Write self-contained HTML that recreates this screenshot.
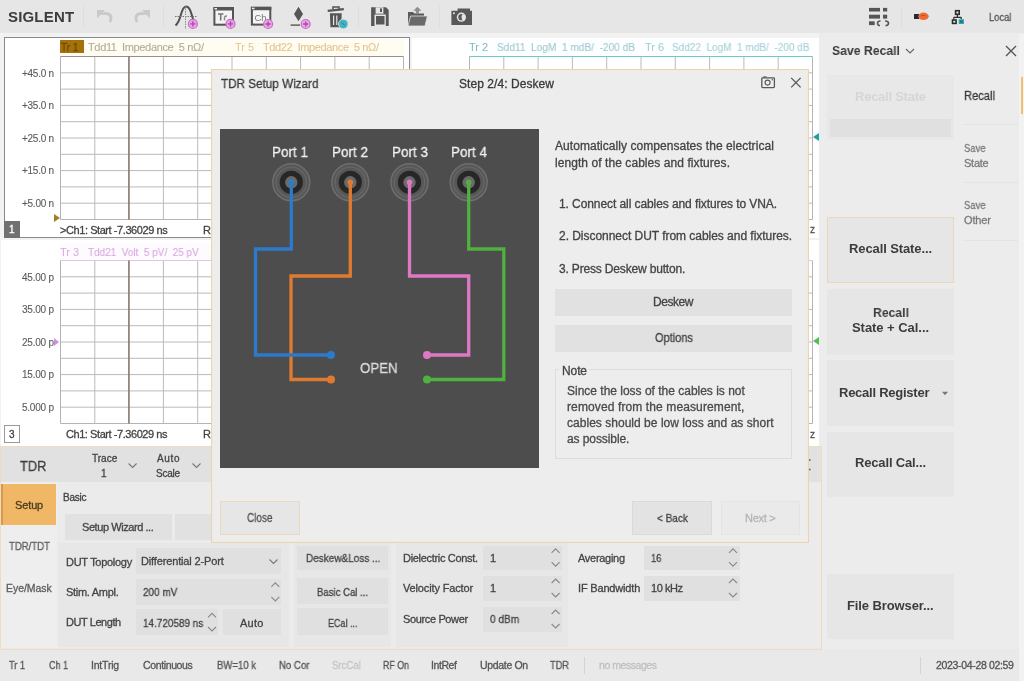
<!DOCTYPE html>
<html><head><meta charset="utf-8"><style>
*{margin:0;padding:0;box-sizing:border-box}
html,body{width:1024px;height:681px;overflow:hidden;background:#ececec;font-family:"Liberation Sans",sans-serif;color:#444}
.a{position:absolute}
.t{position:absolute;white-space:nowrap;will-change:transform;-webkit-text-stroke:0.3px currentColor}
svg{position:absolute;overflow:visible}
</style></head><body>
<div class="a" style="left:0px;top:33px;width:820px;height:413px;background:#f2f2f2;"></div>
<div class="a" style="left:4px;top:37px;width:406px;height:201px;background:#fff;border:1px solid #8a8a8a"></div>
<div class="a" style="left:411.5px;top:38px;width:407.5px;height:200px;background:#fff;"></div>
<div class="a" style="left:1px;top:240px;width:409px;height:206px;background:#fff;"></div>
<div class="a" style="left:411.5px;top:240px;width:407.5px;height:206px;background:#fff;"></div>
<div class="a" style="left:60px;top:39px;width:344px;height:17px;background:#fffcf2;"></div>
<div class="a" style="left:469px;top:39px;width:344px;height:17px;background:#fcfeff;"></div>
<div class="a" style="left:60px;top:243px;width:344px;height:17px;background:#fefbfe;"></div>
<svg style="left:0;top:0" width="1024" height="681"><path d="M94.80 56.5 L94.80 219.5 M129.10 56.5 L129.10 219.5 M163.40 56.5 L163.40 219.5 M197.70 56.5 L197.70 219.5 M232.00 56.5 L232.00 219.5 M266.30 56.5 L266.30 219.5 M300.60 56.5 L300.60 219.5 M334.90 56.5 L334.90 219.5 M369.20 56.5 L369.20 219.5 M60.5 72.80 L403.5 72.80 M60.5 89.10 L403.5 89.10 M60.5 105.40 L403.5 105.40 M60.5 121.70 L403.5 121.70 M60.5 138.00 L403.5 138.00 M60.5 154.30 L403.5 154.30 M60.5 170.60 L403.5 170.60 M60.5 186.90 L403.5 186.90 M60.5 203.20 L403.5 203.20 " stroke="#bababa" stroke-width="1" fill="none"/><path d="M60.5 56.5 L60.5 219.5 L403.5 219.5 L403.5 56.5" stroke="#b4b4b4" stroke-width="1" fill="none"/><path d="M60.5 56.5 L403.5 56.5" stroke="#9a9088" stroke-width="1.2"/><path d="M128.9 56.5 L128.9 219.5" stroke="#80685e" stroke-width="1.3"/></svg>
<svg style="left:0;top:0" width="1024" height="681"><path d="M503.80 56.5 L503.80 219.5 M538.10 56.5 L538.10 219.5 M572.40 56.5 L572.40 219.5 M606.70 56.5 L606.70 219.5 M641.00 56.5 L641.00 219.5 M675.30 56.5 L675.30 219.5 M709.60 56.5 L709.60 219.5 M743.90 56.5 L743.90 219.5 M778.20 56.5 L778.20 219.5 M469.5 72.80 L812.5 72.80 M469.5 89.10 L812.5 89.10 M469.5 105.40 L812.5 105.40 M469.5 121.70 L812.5 121.70 M469.5 138.00 L812.5 138.00 M469.5 154.30 L812.5 154.30 M469.5 170.60 L812.5 170.60 M469.5 186.90 L812.5 186.90 M469.5 203.20 L812.5 203.20 " stroke="#bababa" stroke-width="1" fill="none"/><path d="M469.5 56.5 L469.5 219.5 L812.5 219.5 L812.5 56.5" stroke="#b4b4b4" stroke-width="1" fill="none"/><path d="M469.5 56.5 L812.5 56.5" stroke="#70c8c8" stroke-width="1.2"/></svg>
<svg style="left:0;top:0" width="1024" height="681"><path d="M94.80 260.5 L94.80 423.5 M129.10 260.5 L129.10 423.5 M163.40 260.5 L163.40 423.5 M197.70 260.5 L197.70 423.5 M232.00 260.5 L232.00 423.5 M266.30 260.5 L266.30 423.5 M300.60 260.5 L300.60 423.5 M334.90 260.5 L334.90 423.5 M369.20 260.5 L369.20 423.5 M60.5 276.80 L403.5 276.80 M60.5 293.10 L403.5 293.10 M60.5 309.40 L403.5 309.40 M60.5 325.70 L403.5 325.70 M60.5 342.00 L403.5 342.00 M60.5 358.30 L403.5 358.30 M60.5 374.60 L403.5 374.60 M60.5 390.90 L403.5 390.90 M60.5 407.20 L403.5 407.20 " stroke="#bababa" stroke-width="1" fill="none"/><path d="M60.5 260.5 L60.5 423.5 L403.5 423.5 L403.5 260.5" stroke="#b4b4b4" stroke-width="1" fill="none"/><path d="M60.5 260.5 L403.5 260.5" stroke="#e0c4ea" stroke-width="1.2"/><path d="M128.9 260.5 L128.9 423.5" stroke="#80685e" stroke-width="1.3"/></svg>
<svg style="left:0;top:0" width="1024" height="681"><path d="M503.80 260.5 L503.80 423.5 M538.10 260.5 L538.10 423.5 M572.40 260.5 L572.40 423.5 M606.70 260.5 L606.70 423.5 M641.00 260.5 L641.00 423.5 M675.30 260.5 L675.30 423.5 M709.60 260.5 L709.60 423.5 M743.90 260.5 L743.90 423.5 M778.20 260.5 L778.20 423.5 M469.5 276.80 L812.5 276.80 M469.5 293.10 L812.5 293.10 M469.5 309.40 L812.5 309.40 M469.5 325.70 L812.5 325.70 M469.5 342.00 L812.5 342.00 M469.5 358.30 L812.5 358.30 M469.5 374.60 L812.5 374.60 M469.5 390.90 L812.5 390.90 M469.5 407.20 L812.5 407.20 " stroke="#bababa" stroke-width="1" fill="none"/><path d="M469.5 260.5 L469.5 423.5 L812.5 423.5 L812.5 260.5" stroke="#b4b4b4" stroke-width="1" fill="none"/><path d="M469.5 260.5 L812.5 260.5" stroke="#e0c4ea" stroke-width="1.2"/></svg>
<div class="a" style="left:60px;top:40px;width:24px;height:13px;background:#a5720a;"></div>
<div class="t" style="left:61.00px;top:39.55px;line-height:14.30px;font-size:11px;color:#6a4606;font-weight:normal;transform:scaleX(0.9143);transform-origin:0 0;">Tr 1</div>
<div class="t" style="left:88.00px;top:39.55px;line-height:14.30px;font-size:11px;color:#b4aa9c;font-weight:normal;letter-spacing:-0.347px;-webkit-text-stroke:0.1px currentColor;">Tdd11&nbsp; Impedance&nbsp; 5 n&Omega;/</div>
<div class="t" style="left:235.00px;top:39.55px;line-height:14.30px;font-size:11px;color:#e4c48e;font-weight:normal;-webkit-text-stroke:0;">Tr 5</div>
<div class="t" style="left:263.00px;top:39.55px;line-height:14.30px;font-size:11px;color:#e4c48e;font-weight:normal;letter-spacing:-0.382px;-webkit-text-stroke:0.1px currentColor;">Tdd22&nbsp; Impedance&nbsp; 5 n&Omega;/</div>
<div class="t" style="left:469.00px;top:39.55px;line-height:14.30px;font-size:11px;color:#84b8bc;font-weight:normal;-webkit-text-stroke:0;">Tr 2</div>
<div class="t" style="left:497.00px;top:39.55px;line-height:14.30px;font-size:11px;color:#a0c8d0;font-weight:normal;transform:scaleX(0.9184);transform-origin:0 0;-webkit-text-stroke:0.1px currentColor;">Sdd11&nbsp; LogM&nbsp; 1 mdB/&nbsp; -200 dB</div>
<div class="t" style="left:645.00px;top:39.55px;line-height:14.30px;font-size:11px;color:#9cccd4;font-weight:normal;-webkit-text-stroke:0;">Tr 6</div>
<div class="t" style="left:672.00px;top:39.55px;line-height:14.30px;font-size:11px;color:#a8d0d8;font-weight:normal;transform:scaleX(0.9098);transform-origin:0 0;-webkit-text-stroke:0.1px currentColor;">Sdd22&nbsp; LogM&nbsp; 1 mdB/&nbsp; -200 dB</div>
<div class="t" style="left:60.00px;top:244.75px;line-height:14.30px;font-size:11px;color:#d8a8e0;font-weight:normal;-webkit-text-stroke:0;">Tr 3</div>
<div class="t" style="left:88.00px;top:244.75px;line-height:14.30px;font-size:11px;color:#d8a8e0;font-weight:normal;transform:scaleX(0.9050);transform-origin:0 0;-webkit-text-stroke:0.1px currentColor;">Tdd21&nbsp; Volt&nbsp; 5 pV/&nbsp; 25 pV</div>
<div class="t" style="left:22.00px;top:66.50px;line-height:13.00px;font-size:10px;color:#5a5a5a;font-weight:normal;letter-spacing:-0.267px;-webkit-text-stroke:0.1px currentColor;">+45.0 n</div>
<div class="t" style="left:22.00px;top:99.10px;line-height:13.00px;font-size:10px;color:#5a5a5a;font-weight:normal;letter-spacing:-0.267px;-webkit-text-stroke:0.1px currentColor;">+35.0 n</div>
<div class="t" style="left:22.00px;top:131.70px;line-height:13.00px;font-size:10px;color:#5a5a5a;font-weight:normal;letter-spacing:-0.267px;-webkit-text-stroke:0.1px currentColor;">+25.0 n</div>
<div class="t" style="left:22.00px;top:164.30px;line-height:13.00px;font-size:10px;color:#5a5a5a;font-weight:normal;letter-spacing:-0.267px;-webkit-text-stroke:0.1px currentColor;">+15.0 n</div>
<div class="t" style="left:22.00px;top:196.90px;line-height:13.00px;font-size:10px;color:#5a5a5a;font-weight:normal;letter-spacing:-0.267px;-webkit-text-stroke:0.1px currentColor;">+5.00 n</div>
<div class="t" style="left:22.00px;top:270.50px;line-height:13.00px;font-size:10px;color:#5a5a5a;font-weight:normal;letter-spacing:-0.233px;-webkit-text-stroke:0.1px currentColor;">45.00 p</div>
<div class="t" style="left:22.00px;top:303.10px;line-height:13.00px;font-size:10px;color:#5a5a5a;font-weight:normal;letter-spacing:-0.233px;-webkit-text-stroke:0.1px currentColor;">35.00 p</div>
<div class="t" style="left:22.00px;top:335.70px;line-height:13.00px;font-size:10px;color:#5a5a5a;font-weight:normal;letter-spacing:-0.233px;-webkit-text-stroke:0.1px currentColor;">25.00 p</div>
<div class="t" style="left:22.00px;top:368.30px;line-height:13.00px;font-size:10px;color:#5a5a5a;font-weight:normal;letter-spacing:-0.233px;-webkit-text-stroke:0.1px currentColor;">15.00 p</div>
<div class="t" style="left:22.00px;top:400.90px;line-height:13.00px;font-size:10px;color:#5a5a5a;font-weight:normal;letter-spacing:-0.233px;-webkit-text-stroke:0.1px currentColor;">5.000 p</div>
<svg style="left:0;top:0" width="1024" height="681"><path d="M54 214 L60 218 L54 222 Z" fill="#a08020"/><path d="M54 338 L59 342 L54 346 Z" fill="#c890e4"/><path d="M819 133 L813 137 L819 141 Z" fill="#20a0a0"/><path d="M819 337 L813 341 L819 345 Z" fill="#50c050"/></svg>
<div class="a" style="left:4px;top:221px;width:16px;height:17px;background:#707070;"></div>
<div class="t" style="left:9.20px;top:223.00px;line-height:13.00px;font-size:10px;color:#fff;font-weight:normal;">1</div>
<div class="t" style="left:60.00px;top:222.55px;line-height:14.30px;font-size:11px;color:#444;font-weight:normal;letter-spacing:-0.429px;">&gt;Ch1: Start -7.36029 ns</div>
<div class="t" style="left:203.00px;top:222.55px;line-height:14.30px;font-size:11px;color:#444;font-weight:normal;">R</div>
<div class="a" style="left:4px;top:425px;width:16px;height:18px;background:#fff;border:1px solid #9a9a9a"></div>
<div class="t" style="left:9.20px;top:427.50px;line-height:13.00px;font-size:10px;color:#444;font-weight:normal;">3</div>
<div class="t" style="left:66.00px;top:426.85px;line-height:14.30px;font-size:11px;color:#444;font-weight:normal;letter-spacing:-0.436px;">Ch1: Start -7.36029 ns</div>
<div class="t" style="left:203.00px;top:426.85px;line-height:14.30px;font-size:11px;color:#444;font-weight:normal;">R</div>
<div class="t" style="left:810.00px;top:223.20px;line-height:13.00px;font-size:10px;color:#555;font-weight:normal;">z</div>
<div class="t" style="left:810.00px;top:427.50px;line-height:13.00px;font-size:10px;color:#555;font-weight:normal;">z</div>
<div class="a" style="left:819px;top:34px;width:205px;height:616px;background:#ececec;"></div>
<div class="a" style="left:1019px;top:34px;width:5px;height:647px;background:#f2f2f2;"></div>
<div class="t" style="left:832.00px;top:42.43px;line-height:17.55px;font-size:13.5px;color:#3a3a3a;font-weight:bold;transform:scaleX(0.9059);transform-origin:0 0;-webkit-text-stroke:0;">Save Recall</div>
<div class="a" style="left:827px;top:75px;width:127px;height:65px;background:#e8e8e8;"></div>
<div class="a" style="left:830px;top:119px;width:121px;height:18px;background:#e0e0e0;"></div>
<div class="t" style="left:855.00px;top:88.95px;line-height:16.90px;font-size:13px;color:#d6d6d6;font-weight:bold;letter-spacing:-0.246px;-webkit-text-stroke:0;">Recall State</div>
<div class="a" style="left:1021px;top:77px;width:2px;height:37px;background:#f0c070;"></div>
<div class="t" style="left:964.40px;top:89.20px;line-height:15.60px;font-size:12px;color:#3a3a3a;font-weight:normal;transform:scaleX(0.9293);transform-origin:0 0;">Recall</div>
<div class="a" style="left:963px;top:124px;width:55px;height:1px;background:#e4e4e4;"></div>
<div class="t" style="left:964.40px;top:140.55px;line-height:14.30px;font-size:11px;color:#7a7a7a;font-weight:normal;transform:scaleX(0.8612);transform-origin:0 0;">Save</div>
<div class="t" style="left:964.40px;top:155.55px;line-height:14.30px;font-size:11px;color:#7a7a7a;font-weight:normal;letter-spacing:-0.257px;">State</div>
<div class="a" style="left:963px;top:182px;width:55px;height:1px;background:#e4e4e4;"></div>
<div class="t" style="left:964.40px;top:197.85px;line-height:14.30px;font-size:11px;color:#7a7a7a;font-weight:normal;transform:scaleX(0.8612);transform-origin:0 0;">Save</div>
<div class="t" style="left:964.40px;top:213.35px;line-height:14.30px;font-size:11px;color:#7a7a7a;font-weight:normal;letter-spacing:-0.125px;">Other</div>
<div class="a" style="left:963px;top:240px;width:55px;height:1px;background:#e4e4e4;"></div>
<div class="a" style="left:827px;top:217px;width:127px;height:66px;background:#e6e6e6;border:1px solid #ecd8b8"></div>
<div class="t" style="left:849.00px;top:240.85px;line-height:16.90px;font-size:13px;color:#3c3c3c;font-weight:bold;letter-spacing:-0.107px;-webkit-text-stroke:0;">Recall State...</div>
<div class="a" style="left:827px;top:289px;width:127px;height:66px;background:#e6e6e6;"></div>
<div class="t" style="left:872.50px;top:304.55px;line-height:16.90px;font-size:13px;color:#3c3c3c;font-weight:bold;transform:scaleX(0.9387);transform-origin:0 0;-webkit-text-stroke:0;">Recall</div>
<div class="t" style="left:852.00px;top:320.25px;line-height:16.90px;font-size:13px;color:#3c3c3c;font-weight:bold;letter-spacing:-0.047px;-webkit-text-stroke:0;">State + Cal...</div>
<div class="a" style="left:827px;top:360px;width:127px;height:66px;background:#e6e6e6;"></div>
<div class="t" style="left:838.50px;top:385.15px;line-height:16.90px;font-size:13px;color:#3c3c3c;font-weight:bold;letter-spacing:-0.249px;-webkit-text-stroke:0;">Recall Register</div>
<div class="a" style="left:827px;top:432px;width:127px;height:65px;background:#e6e6e6;"></div>
<div class="t" style="left:855.00px;top:454.75px;line-height:16.90px;font-size:13px;color:#3c3c3c;font-weight:bold;letter-spacing:-0.161px;-webkit-text-stroke:0;">Recall Cal...</div>
<div class="a" style="left:827px;top:574px;width:127px;height:65px;background:#e6e6e6;"></div>
<div class="t" style="left:847.20px;top:598.25px;line-height:16.90px;font-size:13px;color:#3c3c3c;font-weight:bold;letter-spacing:-0.110px;-webkit-text-stroke:0;">File Browser...</div>
<svg style="left:0;top:0" width="1024" height="681"><path d="M906 49 L910 53 L914 49" fill="none" stroke="#666" stroke-width="1.2"/><path d="M1006 46 L1016 56 M1016 46 L1006 56" stroke="#555" stroke-width="1.4"/><path d="M942 391.8 L948 391.8 L945 395.2 Z" fill="#777"/></svg>
<div class="a" style="left:0px;top:446px;width:822px;height:203px;background:#e9e9e9;border-top:1px solid #efdcc0;border-right:1px solid #efdcc0;border-left:1px solid #efdcc0"></div>
<div class="a" style="left:1px;top:447px;width:820px;height:35px;background:#e1e1e1;"></div>
<div class="t" style="left:20.40px;top:455.95px;line-height:19.50px;font-size:15px;color:#3e3e3e;font-weight:normal;transform:scaleX(0.8544);transform-origin:0 0;">TDR</div>
<div class="t" style="left:92.35px;top:451.70px;line-height:13.00px;font-size:10px;color:#444;font-weight:normal;letter-spacing:0.025px;">Trace</div>
<div class="t" style="left:101.40px;top:466.80px;line-height:13.00px;font-size:10px;color:#444;font-weight:normal;">1</div>
<div class="t" style="left:156.70px;top:451.70px;line-height:13.00px;font-size:10px;color:#444;font-weight:normal;letter-spacing:0.667px;">Auto</div>
<div class="t" style="left:156.40px;top:466.80px;line-height:13.00px;font-size:10px;color:#444;font-weight:normal;letter-spacing:-0.250px;">Scale</div>
<div class="a" style="left:1px;top:482px;width:56px;height:166px;background:#eeeeee;"></div>
<div class="a" style="left:1px;top:483.5px;width:55px;height:41px;background:#f0b866;"></div>
<div class="a" style="left:1px;top:483.5px;width:2px;height:41px;background:#d89a48;"></div>
<div class="t" style="left:15.30px;top:497.55px;line-height:14.30px;font-size:11px;color:#4a3a20;font-weight:normal;letter-spacing:-0.128px;">Setup</div>
<div class="t" style="left:8.95px;top:540.17px;line-height:13.65px;font-size:10.5px;color:#5e5e5e;font-weight:normal;transform:scaleX(0.9101);transform-origin:0 0;">TDR/TDT</div>
<div class="t" style="left:5.90px;top:582.38px;line-height:13.65px;font-size:10.5px;color:#5e5e5e;font-weight:normal;letter-spacing:-0.057px;">Eye/Mask</div>
<div class="a" style="left:57px;top:482px;width:764px;height:166px;background:#ebebeb;"></div>
<div class="t" style="left:63.40px;top:491.10px;line-height:13.00px;font-size:10px;color:#444;font-weight:normal;letter-spacing:-0.250px;">Basic</div>
<div class="a" style="left:65px;top:514px;width:107px;height:26px;background:#e1e1e1;"></div>
<div class="t" style="left:82.15px;top:519.85px;line-height:14.30px;font-size:11px;color:#444;font-weight:normal;letter-spacing:-0.434px;">Setup Wizard ...</div>
<div class="a" style="left:175px;top:514px;width:40px;height:26px;background:#e1e1e1;"></div>
<div class="a" style="left:58px;top:543px;width:231px;height:104px;background:#e7e7e7;"></div>
<div class="t" style="left:65.80px;top:554.55px;line-height:14.30px;font-size:11px;color:#444;font-weight:normal;letter-spacing:-0.282px;">DUT Topology</div>
<div class="t" style="left:65.80px;top:585.15px;line-height:14.30px;font-size:11px;color:#444;font-weight:normal;letter-spacing:-0.286px;">Stim. Ampl.</div>
<div class="t" style="left:65.80px;top:615.45px;line-height:14.30px;font-size:11px;color:#444;font-weight:normal;letter-spacing:-0.430px;">DUT Length</div>
<div class="a" style="left:136px;top:548px;width:145px;height:26px;background:#e0e0e0;"></div>
<div class="t" style="left:141.00px;top:554.45px;line-height:14.30px;font-size:11px;color:#444;font-weight:normal;letter-spacing:-0.148px;">Differential 2-Port</div>
<div class="a" style="left:136px;top:578.5px;width:145px;height:26px;background:#e0e0e0;"></div>
<div class="t" style="left:142.50px;top:585.35px;line-height:14.30px;font-size:11px;color:#444;font-weight:normal;transform:scaleX(0.9065);transform-origin:0 0;">200 mV</div>
<div class="a" style="left:136px;top:608.5px;width:82px;height:26.5px;background:#e0e0e0;"></div>
<div class="t" style="left:142.50px;top:615.85px;line-height:14.30px;font-size:11px;color:#444;font-weight:normal;transform:scaleX(0.9031);transform-origin:0 0;">14.720589 ns</div>
<div class="a" style="left:223px;top:608.5px;width:58px;height:26.5px;background:#e0e0e0;"></div>
<div class="t" style="left:240.20px;top:615.85px;line-height:14.30px;font-size:11px;color:#444;font-weight:normal;letter-spacing:0.247px;">Auto</div>
<div class="a" style="left:294px;top:543px;width:97px;height:104px;background:#e7e7e7;"></div>
<div class="a" style="left:297px;top:546px;width:91px;height:24px;background:#e0e0e0;"></div>
<div class="t" style="left:305.60px;top:551.25px;line-height:14.30px;font-size:11px;color:#444;font-weight:normal;transform:scaleX(0.9079);transform-origin:0 0;">Deskew&amp;Loss ...</div>
<div class="a" style="left:297px;top:578px;width:91px;height:26px;background:#e0e0e0;"></div>
<div class="t" style="left:316.90px;top:584.65px;line-height:14.30px;font-size:11px;color:#444;font-weight:normal;transform:scaleX(0.8699);transform-origin:0 0;">Basic Cal ...</div>
<div class="a" style="left:297px;top:608px;width:91px;height:27px;background:#e0e0e0;"></div>
<div class="t" style="left:327.70px;top:615.55px;line-height:14.30px;font-size:11px;color:#444;font-weight:normal;transform:scaleX(0.8149);transform-origin:0 0;">ECal ...</div>
<div class="a" style="left:396px;top:543px;width:172px;height:104px;background:#e7e7e7;"></div>
<div class="t" style="left:403.30px;top:550.85px;line-height:14.30px;font-size:11px;color:#444;font-weight:normal;letter-spacing:-0.317px;">Dielectric Const.</div>
<div class="t" style="left:403.30px;top:581.05px;line-height:14.30px;font-size:11px;color:#444;font-weight:normal;letter-spacing:-0.140px;">Velocity Factor</div>
<div class="t" style="left:403.30px;top:611.65px;line-height:14.30px;font-size:11px;color:#444;font-weight:normal;letter-spacing:-0.362px;">Source Power</div>
<div class="a" style="left:482.5px;top:546px;width:79px;height:24px;background:#e0e0e0;"></div>
<div class="t" style="left:489.70px;top:550.85px;line-height:14.30px;font-size:11px;color:#444;font-weight:normal;">1</div>
<div class="a" style="left:482.5px;top:575.5px;width:79px;height:25.5px;background:#e0e0e0;"></div>
<div class="t" style="left:489.70px;top:581.05px;line-height:14.30px;font-size:11px;color:#444;font-weight:normal;">1</div>
<div class="a" style="left:482.5px;top:606.5px;width:79px;height:25px;background:#e0e0e0;"></div>
<div class="t" style="left:489.70px;top:611.65px;line-height:14.30px;font-size:11px;color:#444;font-weight:normal;transform:scaleX(0.9154);transform-origin:0 0;">0 dBm</div>
<div class="t" style="left:578.30px;top:550.85px;line-height:14.30px;font-size:11px;color:#444;font-weight:normal;letter-spacing:-0.285px;">Averaging</div>
<div class="t" style="left:578.30px;top:581.05px;line-height:14.30px;font-size:11px;color:#444;font-weight:normal;letter-spacing:-0.176px;">IF Bandwidth</div>
<div class="a" style="left:644.4px;top:546px;width:96px;height:24px;background:#e0e0e0;"></div>
<div class="t" style="left:651.00px;top:550.85px;line-height:14.30px;font-size:11px;color:#444;font-weight:normal;transform:scaleX(0.8600);transform-origin:0 0;">16</div>
<div class="a" style="left:644.4px;top:575.5px;width:96px;height:25.5px;background:#e0e0e0;"></div>
<div class="t" style="left:650.70px;top:581.05px;line-height:14.30px;font-size:11px;color:#444;font-weight:normal;letter-spacing:-0.442px;">10 kHz</div>
<svg style="left:0;top:0" width="1024" height="681"><path d="M128.6 463.5 L132.6 467.5 L136.6 463.5" fill="none" stroke="#777" stroke-width="1.1"/><path d="M192.5 463.5 L196.5 467.5 L200.5 463.5" fill="none" stroke="#777" stroke-width="1.1"/><path d="M269.5 559.5 L273.5 563.5 L277.5 559.5" fill="none" stroke="#777" stroke-width="1.1"/><path d="M271.3 586.8 L275.3 582.8 L279.3 586.8" fill="none" stroke="#888" stroke-width="1.1"/><path d="M271.3 596.9 L275.3 600.9 L279.3 596.9" fill="none" stroke="#888" stroke-width="1.1"/><path d="M208 617.3 L212 613.3 L216 617.3" fill="none" stroke="#888" stroke-width="1.1"/><path d="M208 627 L212 631 L216 627" fill="none" stroke="#888" stroke-width="1.1"/><path d="M551.6 552.8 L555.6 548.8 L559.6 552.8" fill="none" stroke="#888" stroke-width="1.1"/><path d="M551.6 562.1 L555.6 566.1 L559.6 562.1" fill="none" stroke="#888" stroke-width="1.1"/><path d="M551.6 583 L555.6 579 L559.6 583" fill="none" stroke="#888" stroke-width="1.1"/><path d="M551.6 593 L555.6 597 L559.6 593" fill="none" stroke="#888" stroke-width="1.1"/><path d="M551.6 614 L555.6 610 L559.6 614" fill="none" stroke="#888" stroke-width="1.1"/><path d="M551.6 624 L555.6 628 L559.6 624" fill="none" stroke="#888" stroke-width="1.1"/><path d="M729 552.8 L733 548.8 L737 552.8" fill="none" stroke="#888" stroke-width="1.1"/><path d="M729 562.1 L733 566.1 L737 562.1" fill="none" stroke="#888" stroke-width="1.1"/><path d="M729 583 L733 579 L737 583" fill="none" stroke="#888" stroke-width="1.1"/><path d="M729 593 L733 597 L737 593" fill="none" stroke="#888" stroke-width="1.1"/><circle cx="809.8" cy="460" r="0.9" fill="#666"/><circle cx="809.8" cy="469.5" r="0.9" fill="#666"/></svg>
<div class="a" style="left:0px;top:649px;width:1019px;height:32px;background:#e9e9e9;"></div>
<div class="a" style="left:0px;top:649px;width:822px;height:1px;background:#ecdcc4;"></div>
<div class="t" style="left:9.40px;top:658.67px;line-height:13.65px;font-size:10.5px;color:#555;font-weight:normal;transform:scaleX(0.8758);transform-origin:0 0;">Tr 1</div>
<div class="t" style="left:48.80px;top:658.67px;line-height:13.65px;font-size:10.5px;color:#555;font-weight:normal;transform:scaleX(0.8666);transform-origin:0 0;">Ch 1</div>
<div class="t" style="left:91.30px;top:658.67px;line-height:13.65px;font-size:10.5px;color:#555;font-weight:normal;letter-spacing:-0.200px;">IntTrig</div>
<div class="t" style="left:142.80px;top:658.67px;line-height:13.65px;font-size:10.5px;color:#555;font-weight:normal;letter-spacing:-0.370px;">Continuous</div>
<div class="t" style="left:216.50px;top:658.67px;line-height:13.65px;font-size:10.5px;color:#555;font-weight:normal;transform:scaleX(0.9082);transform-origin:0 0;">BW=10 k</div>
<div class="t" style="left:278.90px;top:658.67px;line-height:13.65px;font-size:10.5px;color:#555;font-weight:normal;transform:scaleX(0.9163);transform-origin:0 0;">No Cor</div>
<div class="t" style="left:331.70px;top:658.67px;line-height:13.65px;font-size:10.5px;color:#c4c4c4;font-weight:normal;transform:scaleX(0.9143);transform-origin:0 0;">SrcCal</div>
<div class="t" style="left:383.00px;top:658.67px;line-height:13.65px;font-size:10.5px;color:#555;font-weight:normal;transform:scaleX(0.8422);transform-origin:0 0;">RF On</div>
<div class="t" style="left:431.30px;top:658.67px;line-height:13.65px;font-size:10.5px;color:#555;font-weight:normal;letter-spacing:-0.427px;">IntRef</div>
<div class="t" style="left:480.00px;top:658.67px;line-height:13.65px;font-size:10.5px;color:#555;font-weight:normal;letter-spacing:-0.327px;">Update On</div>
<div class="t" style="left:550.00px;top:658.67px;line-height:13.65px;font-size:10.5px;color:#555;font-weight:normal;transform:scaleX(0.8784);transform-origin:0 0;">TDR</div>
<div class="t" style="left:599.00px;top:658.67px;line-height:13.65px;font-size:10.5px;color:#c0c0c0;font-weight:normal;letter-spacing:-0.447px;">no messages</div>
<div class="a" style="left:584px;top:657px;width:1px;height:17px;background:#d4d4d4;"></div>
<div class="a" style="left:920px;top:657px;width:1px;height:17px;background:#d4d4d4;"></div>
<div class="t" style="left:935.60px;top:658.67px;line-height:13.65px;font-size:10.5px;color:#555;font-weight:normal;letter-spacing:-0.330px;">2023-04-28 02:59</div>
<div class="a" style="left:0px;top:0px;width:1024px;height:33px;background:#e6e6e6;"></div>
<div class="t" style="left:8.00px;top:7.25px;line-height:19.50px;font-size:15px;color:#3c3c3c;font-weight:bold;letter-spacing:0.175px;-webkit-text-stroke:0;">SIGLENT</div>
<div class="a" style="left:83px;top:6px;width:1px;height:22px;background:#dedede;"></div>
<div class="a" style="left:163px;top:6px;width:1px;height:22px;background:#dedede;"></div>
<div class="a" style="left:358px;top:6px;width:1px;height:22px;background:#dedede;"></div>
<div class="a" style="left:439px;top:6px;width:1px;height:22px;background:#dedede;"></div>
<div class="a" style="left:901px;top:6px;width:1px;height:22px;background:#dedede;"></div>
<svg style="left:0;top:0" width="1024" height="34">
<!-- undo / redo -->
<g fill="#c9c9c9">
<path d="M97 10 L105 10 L102.5 12.6 Q104 12 106 12 Q112.5 12.5 112.5 18 Q112.3 21 111 22.6 L108.6 21.6 Q109.6 20 109.5 18 Q109.2 15 106 15 Q103.8 15 100.7 14.5 L97 18.5 Z"/>
<path d="M150 10 L142 10 L144.5 12.6 Q143 12 141 12 Q134.5 12.5 134.5 18 Q134.7 21 136 22.6 L138.4 21.6 Q137.4 20 137.5 18 Q137.8 15 141 15 Q143.2 15 146.3 14.5 L150 18.5 Z"/>
</g>
<!-- marker icon -->
<path d="M175.5 25.5 Q178.5 23 180.5 16 Q183 6.5 186 6.5 Q189.5 6.5 191.5 14 Q192.5 17.5 193 19" fill="none" stroke="#505050" stroke-width="2"/>
<path d="M175 16.5 L197 16.5" stroke="#777" stroke-width="1" stroke-dasharray="1.5,1"/>
<path d="M185.5 6 L185.5 29" stroke="#888" stroke-width="1" stroke-dasharray="1.5,1"/>
<!-- Tr icon -->
<rect x="214.4" y="8.1" width="18.6" height="16.6" fill="#f4f4f4" stroke="#555" stroke-width="2"/>
<rect x="213.4" y="7.1" width="20.6" height="3.4" fill="#555"/>
<rect x="214.5" y="8" width="2.5" height="1.5" fill="#eee"/>
<path d="M218 14 L223.5 14 M220.7 14 L220.7 20.5" stroke="#777" stroke-width="1.6"/>
<path d="M224.5 20.5 L224.5 17 Q225 16 227 16" fill="none" stroke="#889" stroke-width="1.4"/>
<!-- Ch icon -->
<rect x="251.9" y="7.8" width="18.4" height="16.8" fill="#f4f4f4" stroke="#555" stroke-width="2"/>
<rect x="250.9" y="6.8" width="20.4" height="3.4" fill="#555"/>
<rect x="252" y="7.7" width="2.5" height="1.5" fill="#eee"/>
<text x="254.5" y="21.3" font-family="Liberation Sans" font-size="9.5" fill="#777">Ch</text>
<!-- diamond -->
<path d="M298.5 6.8 L303 14 L298.5 21.3 L294 14 Z" fill="#555"/>
<path d="M290.6 25.1 L300 25.1" stroke="#555" stroke-width="1.4"/>
<!-- trash -->
<path d="M327.7 10.8 L343.8 9.2" stroke="#555" stroke-width="2.2"/>
<path d="M333 9 L333 7 L339 7 L339 9" fill="none" stroke="#555" stroke-width="1.6"/>
<path d="M329.9 13.3 L341.7 13.3 L341.2 27.2 L330.4 27.2 Z" fill="#555"/>
<path d="M333.6 15.5 L333.6 25 M336.8 15.5 L336.8 25" stroke="#e6e6e6" stroke-width="1.2"/>
<!-- save -->
<path d="M371.1 7.3 L386 7.3 L388.7 10 L388.7 26 L371.1 26 Z" fill="#585858"/>
<rect x="375.6" y="7.3" width="7.8" height="6.4" fill="#e6e6e6"/>
<rect x="380" y="8.4" width="2" height="3.6" fill="#585858"/>
<rect x="374.5" y="14.5" width="11.3" height="11.5" fill="#e6e6e6"/>
<rect x="376" y="16" width="8.5" height="8.5" fill="#585858"/>
<!-- folder -->
<path d="M408 12 L413 12 L414.5 13.5 L424 13.5 L424 26 L408 26 Z" fill="#5a5a5a"/>
<path d="M410.5 16 L427.4 16 L425 26 L408 26 Z" fill="#6a6a6a" stroke="#e6e6e6" stroke-width="0.8"/>
<path d="M417.4 6.7 L421.5 10.8 L419 10.8 L419 14 L415.8 14 L415.8 10.8 L413.3 10.8 Z" fill="#8e8e8e"/>
<!-- camera -->
<path d="M451.4 10.8 L457.6 10.8 L457.6 8.4 L470 8.4 L470 10.8 L472 10.8 L472 24.9 L451.4 24.9 Z" fill="#585858"/>
<circle cx="461.4" cy="17.2" r="4.6" fill="#e6e6e6"/>
<circle cx="461.4" cy="17.2" r="3.1" fill="#585858"/>
<path d="M462.2 14.2 A3 3 0 0 1 462.2 20.2 Q460.6 17.2 462.2 14.2 Z" fill="#e6e6e6"/>
<circle cx="453.9" cy="13.2" r="1" fill="#e6e6e6"/>
<!-- pink plus circles -->
<g fill="#e8a6e6" stroke="#c86cc6" stroke-width="1.2">
<circle cx="192.9" cy="23.9" r="4.5"/><circle cx="230.5" cy="23.9" r="4.5"/><circle cx="268.1" cy="24" r="4.5"/><circle cx="305.7" cy="24" r="4.5"/>
</g>
<g stroke="#b046b0" stroke-width="1.4">
<path d="M190.3 23.9 L195.5 23.9 M192.9 21.3 L192.9 26.5"/><path d="M227.9 23.9 L233.1 23.9 M230.5 21.3 L230.5 26.5"/><path d="M265.5 24 L270.7 24 M268.1 21.4 L268.1 26.6"/><path d="M303.1 24 L308.3 24 M305.7 21.4 L305.7 26.6"/>
</g>
<circle cx="343.3" cy="24" r="4.8" fill="#40b4c4" stroke="#e6e6e6" stroke-width="0.8"/>
<path d="M341.5 22.5 L345 25.5" stroke="#2a7e8a" stroke-width="1"/>
<!-- list icon -->
<g fill="#555">
<rect x="869" y="7.9" width="11" height="3.6"/><rect x="883" y="7.9" width="4.2" height="3.6"/>
<rect x="869" y="14.7" width="11" height="3.9"/><rect x="883" y="14.7" width="4.2" height="3.9"/>
<rect x="869" y="21.3" width="5.7" height="3.8"/>
</g>
<path d="M880.5 21 Q877.5 21 877.5 23.2 Q877.5 25.5 880 25.5 M885 21 Q888.5 21 888.5 23.2 Q888.5 25.5 885.5 25.5" fill="none" stroke="#555" stroke-width="1.6"/>
<!-- usb -->
<rect x="914" y="14" width="5" height="5" fill="#2a2a2a"/>
<ellipse cx="923.5" cy="16.3" rx="5.2" ry="3.7" fill="#ee6a36"/>
<path d="M921 15.6 L925.5 15.6" stroke="#b04a20" stroke-width="0.8"/>
<!-- network -->
<rect x="955.6" y="10.7" width="3.6" height="3.6" fill="none" stroke="#2c2c2c" stroke-width="1.6"/>
<path d="M957.4 14.5 L957.4 17.3 M953.8 17.3 L961.2 17.3 M953.8 17.3 L953.8 19.2 M961.2 17.3 L961.2 19.2" stroke="#2c2c2c" stroke-width="1.2" fill="none"/>
<rect x="952.5" y="20" width="3.6" height="3.4" fill="none" stroke="#2c2c2c" stroke-width="1.6"/>
<rect x="958.7" y="19.2" width="5.3" height="4.8" fill="#30a8b4"/>
<rect x="960" y="20.5" width="2.7" height="2.2" fill="#1e6e78"/>
</svg>
<div class="t" style="left:989.00px;top:9.85px;line-height:14.30px;font-size:11px;color:#555;font-weight:normal;transform:scaleX(0.8520);transform-origin:0 0;">Local</div>
<div class="a" style="left:211px;top:69px;width:598px;height:474px;background:#ededed;border:1px solid #e8d4b8;box-shadow:inset 0 0 0 1px #f4eadc"></div>
<div class="t" style="left:220.50px;top:76.05px;line-height:16.90px;font-size:13px;color:#3a3a3a;font-weight:normal;transform:scaleX(0.8993);transform-origin:0 0;">TDR Setup Wizard</div>
<div class="t" style="left:458.50px;top:76.70px;line-height:15.60px;font-size:12px;color:#3a3a3a;font-weight:normal;letter-spacing:0.061px;">Step 2/4: Deskew</div>
<div class="a" style="left:220px;top:129px;width:319px;height:339px;background:#4d4d4d;"></div>
<svg style="left:0;top:0" width="1024" height="681"><rect x="761.8" y="77.8" width="12.6" height="9.8" rx="0.8" fill="none" stroke="#585858" stroke-width="1.3"/><path d="M763.2 77 L766.5 77" stroke="#585858" stroke-width="1.2"/><circle cx="767.6" cy="82.6" r="2.5" fill="none" stroke="#585858" stroke-width="1.1"/><circle cx="772.3" cy="79.8" r="0.7" fill="#585858"/><path d="M791.2 77.8 L800.6 87.4 M800.6 77.8 L791.2 87.4" stroke="#505050" stroke-width="1.2"/><circle cx="291.3" cy="182.3" r="18.5" fill="#575757" stroke="#6e6e6e" stroke-width="1.5"/><circle cx="291.3" cy="182.3" r="15.2" fill="none" stroke="#666" stroke-width="1.3"/><circle cx="291.3" cy="182.3" r="11.6" fill="#272727"/><circle cx="291.3" cy="182.3" r="6.2" fill="#6a6a6a"/><circle cx="291.3" cy="182.3" r="2.8" fill="#2f7fd0"/><circle cx="350.3" cy="182.3" r="18.5" fill="#575757" stroke="#6e6e6e" stroke-width="1.5"/><circle cx="350.3" cy="182.3" r="15.2" fill="none" stroke="#666" stroke-width="1.3"/><circle cx="350.3" cy="182.3" r="11.6" fill="#272727"/><circle cx="350.3" cy="182.3" r="6.2" fill="#6a6a6a"/><circle cx="350.3" cy="182.3" r="2.8" fill="#e07a30"/><circle cx="409.5" cy="182.3" r="18.5" fill="#575757" stroke="#6e6e6e" stroke-width="1.5"/><circle cx="409.5" cy="182.3" r="15.2" fill="none" stroke="#666" stroke-width="1.3"/><circle cx="409.5" cy="182.3" r="11.6" fill="#272727"/><circle cx="409.5" cy="182.3" r="6.2" fill="#6a6a6a"/><circle cx="409.5" cy="182.3" r="2.8" fill="#de78c4"/><circle cx="468.7" cy="182.3" r="18.5" fill="#575757" stroke="#6e6e6e" stroke-width="1.5"/><circle cx="468.7" cy="182.3" r="15.2" fill="none" stroke="#666" stroke-width="1.3"/><circle cx="468.7" cy="182.3" r="11.6" fill="#272727"/><circle cx="468.7" cy="182.3" r="6.2" fill="#6a6a6a"/><circle cx="468.7" cy="182.3" r="2.8" fill="#50b040"/><g fill="none" stroke-width="3.3" stroke-linejoin="miter"><path d="M350.3 182 L350.3 276 L291 276 L291 379.5 L331 379.5" stroke="#e07a30"/><path d="M291.3 182 L291.3 249 L255.5 249 L255.5 355 L331 355" stroke="#2c7acc"/><path d="M409.5 182 L409.5 276 L468.7 276 L468.7 355 L427 355" stroke="#de78c4"/><path d="M468.7 182 L468.7 249 L503.8 249 L503.8 379.5 L427 379.5" stroke="#50b040"/></g><circle cx="331" cy="355" r="4" fill="#2c7acc"/><circle cx="331" cy="379.5" r="4" fill="#e07a30"/><circle cx="427" cy="355" r="4" fill="#de78c4"/><circle cx="427" cy="379.5" r="4" fill="#50b040"/></svg>
<div class="t" style="left:272.30px;top:142.05px;line-height:19.50px;font-size:15px;color:#f0f0f0;font-weight:normal;transform:scaleX(0.8989);transform-origin:0 0;">Port 1</div>
<div class="t" style="left:332.30px;top:142.05px;line-height:19.50px;font-size:15px;color:#f0f0f0;font-weight:normal;transform:scaleX(0.8989);transform-origin:0 0;">Port 2</div>
<div class="t" style="left:391.50px;top:142.05px;line-height:19.50px;font-size:15px;color:#f0f0f0;font-weight:normal;transform:scaleX(0.8989);transform-origin:0 0;">Port 3</div>
<div class="t" style="left:450.70px;top:142.05px;line-height:19.50px;font-size:15px;color:#f0f0f0;font-weight:normal;transform:scaleX(0.8989);transform-origin:0 0;">Port 4</div>
<div class="t" style="left:359.95px;top:357.75px;line-height:19.50px;font-size:15px;color:#dcdcdc;font-weight:normal;transform:scaleX(0.8834);transform-origin:0 0;">OPEN</div>
<div class="t" style="left:555.00px;top:139.40px;line-height:15.60px;font-size:12px;color:#444;font-weight:normal;letter-spacing:0.053px;">Automatically compensates the electrical</div>
<div class="t" style="left:555.00px;top:155.80px;line-height:15.60px;font-size:12px;color:#444;font-weight:normal;letter-spacing:0.067px;">length of the cables and fixtures.</div>
<div class="t" style="left:558.60px;top:196.60px;line-height:15.60px;font-size:12px;color:#444;font-weight:normal;letter-spacing:-0.083px;">1. Connect all cables and fixtures to VNA.</div>
<div class="t" style="left:558.60px;top:229.20px;line-height:15.60px;font-size:12px;color:#444;font-weight:normal;letter-spacing:-0.035px;">2. Disconnect DUT from cables and fixtures.</div>
<div class="t" style="left:558.60px;top:262.20px;line-height:15.60px;font-size:12px;color:#444;font-weight:normal;letter-spacing:-0.167px;">3. Press Deskew button.</div>
<div class="a" style="left:555px;top:289px;width:237px;height:27px;background:#e1e1e1;"></div>
<div class="t" style="left:653.25px;top:295.20px;line-height:15.60px;font-size:12px;color:#444;font-weight:normal;letter-spacing:-0.444px;">Deskew</div>
<div class="a" style="left:555px;top:324.5px;width:237px;height:27px;background:#e1e1e1;"></div>
<div class="t" style="left:654.50px;top:331.20px;line-height:15.60px;font-size:12px;color:#444;font-weight:normal;transform:scaleX(0.9179);transform-origin:0 0;">Options</div>
<div class="a" style="left:555px;top:369px;width:237px;height:90px;background:transparent;border:1px solid #dcdcdc"></div>
<div class="a" style="left:559px;top:364px;width:30px;height:12px;background:#ededed;"></div>
<div class="t" style="left:562.00px;top:364.20px;line-height:15.60px;font-size:12px;color:#444;font-weight:normal;letter-spacing:-0.107px;">Note</div>
<div class="t" style="left:567.30px;top:383.90px;line-height:15.60px;font-size:12px;color:#4a4a4a;font-weight:normal;letter-spacing:-0.008px;">Since the loss of the cables is not</div>
<div class="t" style="left:567.30px;top:399.90px;line-height:15.60px;font-size:12px;color:#4a4a4a;font-weight:normal;letter-spacing:0.114px;">removed from the measurement,</div>
<div class="t" style="left:567.30px;top:415.90px;line-height:15.60px;font-size:12px;color:#4a4a4a;font-weight:normal;letter-spacing:0.029px;">cables should be low loss and as short</div>
<div class="t" style="left:567.30px;top:431.90px;line-height:15.60px;font-size:12px;color:#4a4a4a;font-weight:normal;letter-spacing:-0.087px;">as possible.</div>
<div class="a" style="left:220px;top:500.5px;width:79.5px;height:34px;background:#e6e6e6;border:1px solid #ecd8bc"></div>
<div class="t" style="left:246.75px;top:510.70px;line-height:15.60px;font-size:12px;color:#555;font-weight:normal;transform:scaleX(0.8301);transform-origin:0 0;">Close</div>
<div class="a" style="left:632px;top:500.5px;width:80px;height:34px;background:#e3e3e3;border:1px solid #dadada"></div>
<div class="t" style="left:657.00px;top:511.35px;line-height:14.30px;font-size:11px;color:#444;font-weight:normal;transform:scaleX(0.9091);transform-origin:0 0;">&lt; Back</div>
<div class="a" style="left:720.5px;top:500.5px;width:79.5px;height:34px;background:#eaeaea;border:1px solid #e4e4e4"></div>
<div class="t" style="left:744.60px;top:511.35px;line-height:14.30px;font-size:11px;color:#b4b4b4;font-weight:normal;letter-spacing:-0.264px;">Next &gt;</div>
</body></html>
